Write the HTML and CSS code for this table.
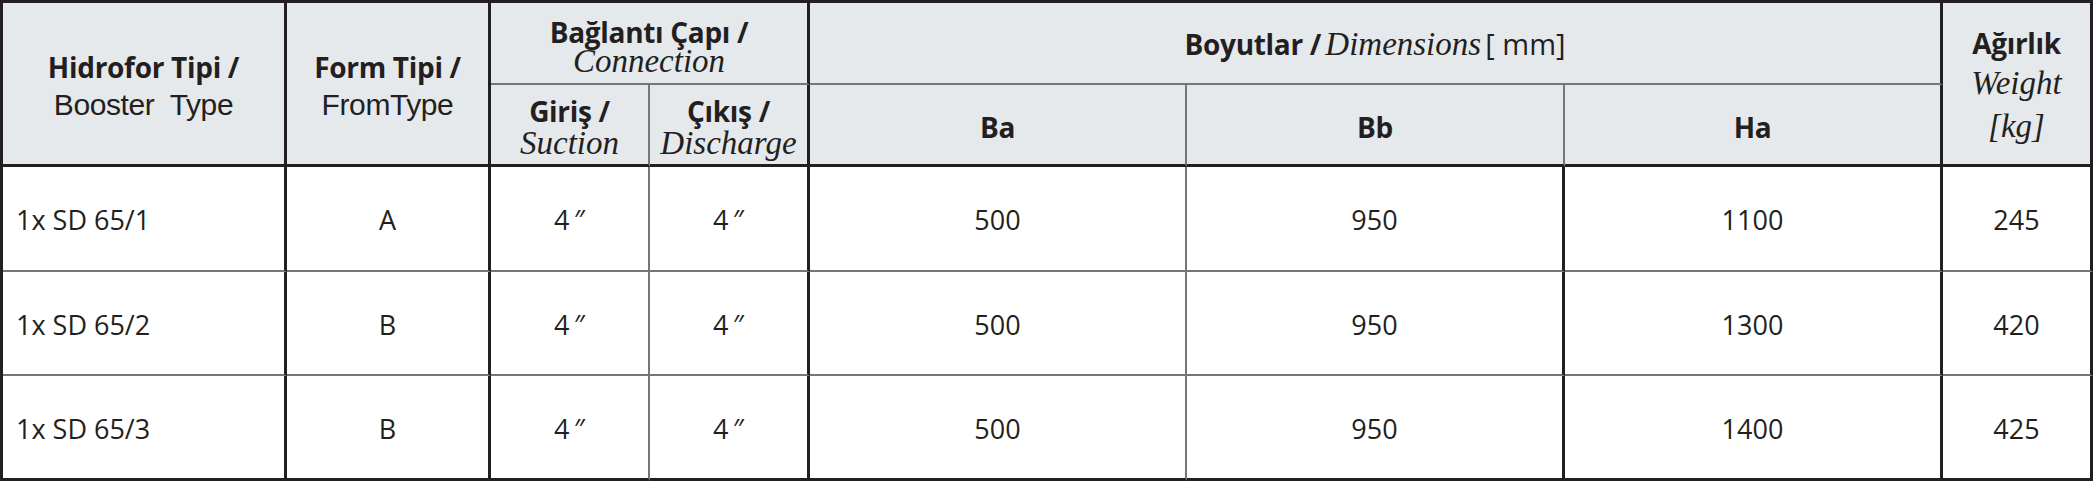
FILE: index.html
```html
<!DOCTYPE html>
<html lang="tr">
<head>
<meta charset="utf-8">
<title>Hidrofor</title>
<link rel="stylesheet" href="styles.css">
</head>
<body>
<div class="sheet">
  <div class="cell head rows-2 thick-b lh38 pad-low">
    <div class="tr">Hidrofor Tipi /</div>
    <div class="en">Booster&nbsp; Type</div>
  </div>
  <div class="cell head rows-2 thick-b lh38 pad-low">
    <div class="tr">Form Tipi /</div>
    <div class="en">FromType</div>
  </div>
  <div class="cell head cols-2 lh32 pad-top">
    <div class="tr drop">Bağlantı Çapı /</div>
    <div class="it">Connection</div>
  </div>
  <div class="cell head cols-3">
    <div><span class="tr">Boyutlar /</span> <span class="it">Dimensions</span> <span class="unit">[ mm]</span></div>
  </div>
  <div class="cell head rows-2 thick-b lh43">
    <div class="tr drop">Ağırlık</div>
    <div class="it">Weight</div>
    <div class="it">[kg]</div>
  </div>

  <div class="cell head thin-r thick-b lh32 pad-top">
    <div class="tr">Giriş /</div>
    <div class="it">Suction</div>
  </div>
  <div class="cell head thick-b lh32 pad-top">
    <div class="tr">Çıkış /</div>
    <div class="it">Discharge</div>
  </div>
  <div class="cell head thin-r thick-b"><div class="tr lower">Ba</div></div>
  <div class="cell head thin-r thick-b"><div class="tr lower">Bb</div></div>
  <div class="cell head thick-b"><div class="tr lower">Ha</div></div>

  <div class="cell data left">1x SD 65/1</div>
  <div class="cell data">A</div>
  <div class="cell data thin-r">4&#8201;″</div>
  <div class="cell data">4&#8201;″</div>
  <div class="cell data thin-r">500</div>
  <div class="cell data">950</div>
  <div class="cell data">1100</div>
  <div class="cell data">245</div>

  <div class="cell data left">1x SD 65/2</div>
  <div class="cell data">B</div>
  <div class="cell data thin-r">4&#8201;″</div>
  <div class="cell data">4&#8201;″</div>
  <div class="cell data thin-r">500</div>
  <div class="cell data">950</div>
  <div class="cell data">1300</div>
  <div class="cell data">420</div>

  <div class="cell data left thick-b">1x SD 65/3</div>
  <div class="cell data thick-b">B</div>
  <div class="cell data thin-r thick-b">4&#8201;″</div>
  <div class="cell data thick-b">4&#8201;″</div>
  <div class="cell data thin-r thick-b">500</div>
  <div class="cell data thick-b">950</div>
  <div class="cell data thick-b">1400</div>
  <div class="cell data thick-b">425</div>
</div>
</body>
</html>
```
FILE: styles.css
```css
html, body {
  margin: 0;
  padding: 0;
  background: #ffffff;
}

.sheet {
  display: grid;
  grid-template-columns: 284px 204px 159px 160px 377px 378px 378px 150px;
  grid-template-rows: 82px 82px 105px 104px 105px;
  width: max-content;
  border-top: 3px solid #231f20;
  border-left: 3px solid #231f20;
  color: #231f20;
  font-family: "Open Sans", "Noto Sans", sans-serif;
}

.cell {
  box-sizing: border-box;
  display: flex;
  flex-direction: column;
  align-items: center;
  justify-content: center;
  text-align: center;
  border-right: 3px solid #231f20;
  border-bottom: 2px solid #767676;
  white-space: nowrap;
}

.head {
  background: #e6e9ec;
}

.rows-2 { grid-row: span 2; }
.cols-2 { grid-column: span 2; }
.cols-3 { grid-column: span 3; }

.thin-r { border-right: 2px solid #767676; }
.thick-b { border-bottom: 3px solid #231f20; }

.lh38 { line-height: 38px; }
.lh32 { line-height: 32px; }
.lh43 { line-height: 43px; }
.pad-top { padding-top: 4px; }
.pad-low { padding-top: 5px; }

.tr {
  font-weight: 700;
  font-size: 28px;
  letter-spacing: -0.3px;
}

.drop {
  margin-top: 3px;
  margin-bottom: -3px;
}

.lower { padding-top: 4px; }

.en {
  font-family: "Liberation Sans", Arial, sans-serif;
  font-size: 30px;
  letter-spacing: -0.4px;
}

.it {
  font-family: "Liberation Serif", "Times New Roman", serif;
  font-style: italic;
  font-size: 33px;
}

.unit {
  font-size: 29px;
}

.data {
  font-size: 27px;
  padding-top: 2px;
}

.left {
  align-items: flex-start;
  padding-left: 13px;
}
```
